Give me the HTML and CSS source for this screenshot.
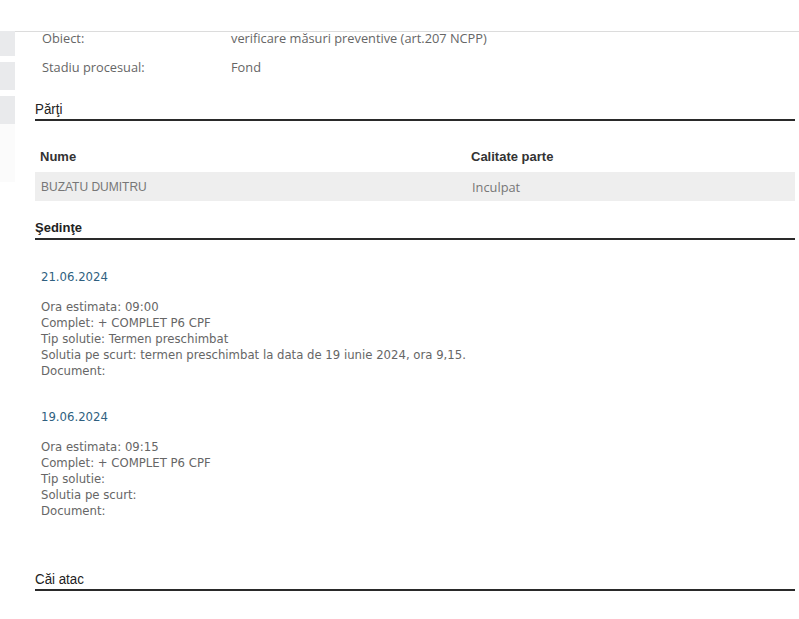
FILE: index.html
```html
<!DOCTYPE html>
<html lang="ro">
<head>
<meta charset="utf-8">
<title>Dosar</title>
<link rel="stylesheet" href="styles.css">
</head>
<body>
<div class="page">
  <aside class="side">
    <div class="side-block"></div>
    <div class="side-block"></div>
    <div class="side-block"></div>
    <div class="side-faint"></div>
  </aside>
  <main class="main">
    <div class="info">
      <div class="info-row"><span class="info-label">Obiect:</span><span class="info-value">verificare măsuri preventive (art.207 NCPP)</span></div>
      <div class="info-row"><span class="info-label">Stadiu procesual:</span><span class="info-value">Fond</span></div>
    </div>

    <h2 class="section-title narrow"><span class="title-text">Părţi</span></h2>
    <table class="parti">
      <thead>
        <tr><th class="col-name">Nume</th><th>Calitate parte</th></tr>
      </thead>
      <tbody>
        <tr><td class="cell-name">BUZATU DUMITRU</td><td class="cell-role">Inculpat</td></tr>
      </tbody>
    </table>

    <h2 class="section-title bold">Şedinţe</h2>
    <div class="sedinte">
      <div class="sedinta">
        <div class="sedinta-date">21.06.2024</div>
        <div class="sedinta-details">
          <div>Ora estimata: 09:00</div>
          <div>Complet: + COMPLET P6 CPF</div>
          <div>Tip solutie: Termen preschimbat</div>
          <div>Solutia pe scurt: termen preschimbat la data de 19 iunie 2024, ora 9,15.</div>
          <div>Document:</div>
        </div>
      </div>
      <div class="sedinta">
        <div class="sedinta-date">19.06.2024</div>
        <div class="sedinta-details">
          <div>Ora estimata: 09:15</div>
          <div>Complet: + COMPLET P6 CPF</div>
          <div>Tip solutie:</div>
          <div>Solutia pe scurt:</div>
          <div>Document:</div>
        </div>
      </div>
    </div>

    <h2 class="section-title narrow last"><span class="title-text">Căi atac</span></h2>
  </main>
</div>
</body>
</html>
```

FILE: styles.css
```css
html, body {
  margin: 0;
  padding: 0;
  background: #ffffff;
}

.page {
  display: flex;
  min-height: 619px;
  overflow: hidden;
}

.side {
  width: 15px;
  flex: none;
  padding-top: 31px;
  display: flex;
  flex-direction: column;
  gap: 6px;
}

.side-block {
  height: 25px;
  background: #e9eaec;
}

.side-block:nth-child(2) {
  height: 28px;
}

.side-block:nth-child(3) {
  height: 28px;
}

.side-faint {
  height: 58px;
  margin-top: -6px;
  background: #fbfbfb;
}

.main {
  flex: 1;
  margin-top: 31px;
  border-top: 1px solid #dcdcdc;
  padding: 0 4px 0 20px;
}

.info {
  margin-top: -9px;
}

.info-row {
  display: grid;
  grid-template-columns: 189px 1fr;
  padding: 6px 0 5px 7px;
  line-height: 18px;
  font-family: "Open Sans", "DejaVu Sans", sans-serif;
  font-size: 12.8px;
  color: #666666;
}

.section-title {
  margin: 19px 0 0;
  padding-bottom: 1px;
  line-height: 18px;
  color: #222222;
  border-bottom: 2px solid #2a2a2a;
}

.section-title.narrow {
  font-family: "Liberation Sans", Arial, sans-serif;
  font-size: 15.5px;
  font-weight: normal;
}

.title-text {
  display: inline-block;
  transform: scaleX(0.86);
  transform-origin: left center;
}

.section-title.bold {
  font-family: "Liberation Sans", Arial, sans-serif;
  font-size: 13px;
  font-weight: bold;
  margin-top: 18px;
}

.section-title.last {
  margin-top: 51px;
}

.parti {
  width: 100%;
  margin-top: 20px;
  border-collapse: collapse;
}

.parti th {
  height: 31px;
  padding: 0 0 0 5px;
  text-align: left;
  font-family: "Liberation Sans", Arial, sans-serif;
  font-size: 13px;
  font-weight: bold;
  color: #333333;
  vertical-align: middle;
}

.parti .col-name {
  width: 426px;
}

.parti td {
  height: 29px;
  padding: 0 0 0 6px;
  background: #eeeeee;
  color: #777777;
  vertical-align: middle;
}

.cell-name {
  font-family: "Liberation Sans", Arial, sans-serif;
  font-size: 12px;
}

.cell-role {
  font-family: "Open Sans", "DejaVu Sans", sans-serif;
  font-size: 12.8px;
}

.sedinte {
  padding: 29px 0 0 6px;
  display: flex;
  flex-direction: column;
  gap: 30px;
  font-family: "DejaVu Sans", Verdana, sans-serif;
  font-size: 11.7px;
  line-height: 16px;
  color: #666666;
}

.sedinta-date {
  color: #2f5f80;
}

.sedinta-details {
  margin-top: 14px;
}
```
